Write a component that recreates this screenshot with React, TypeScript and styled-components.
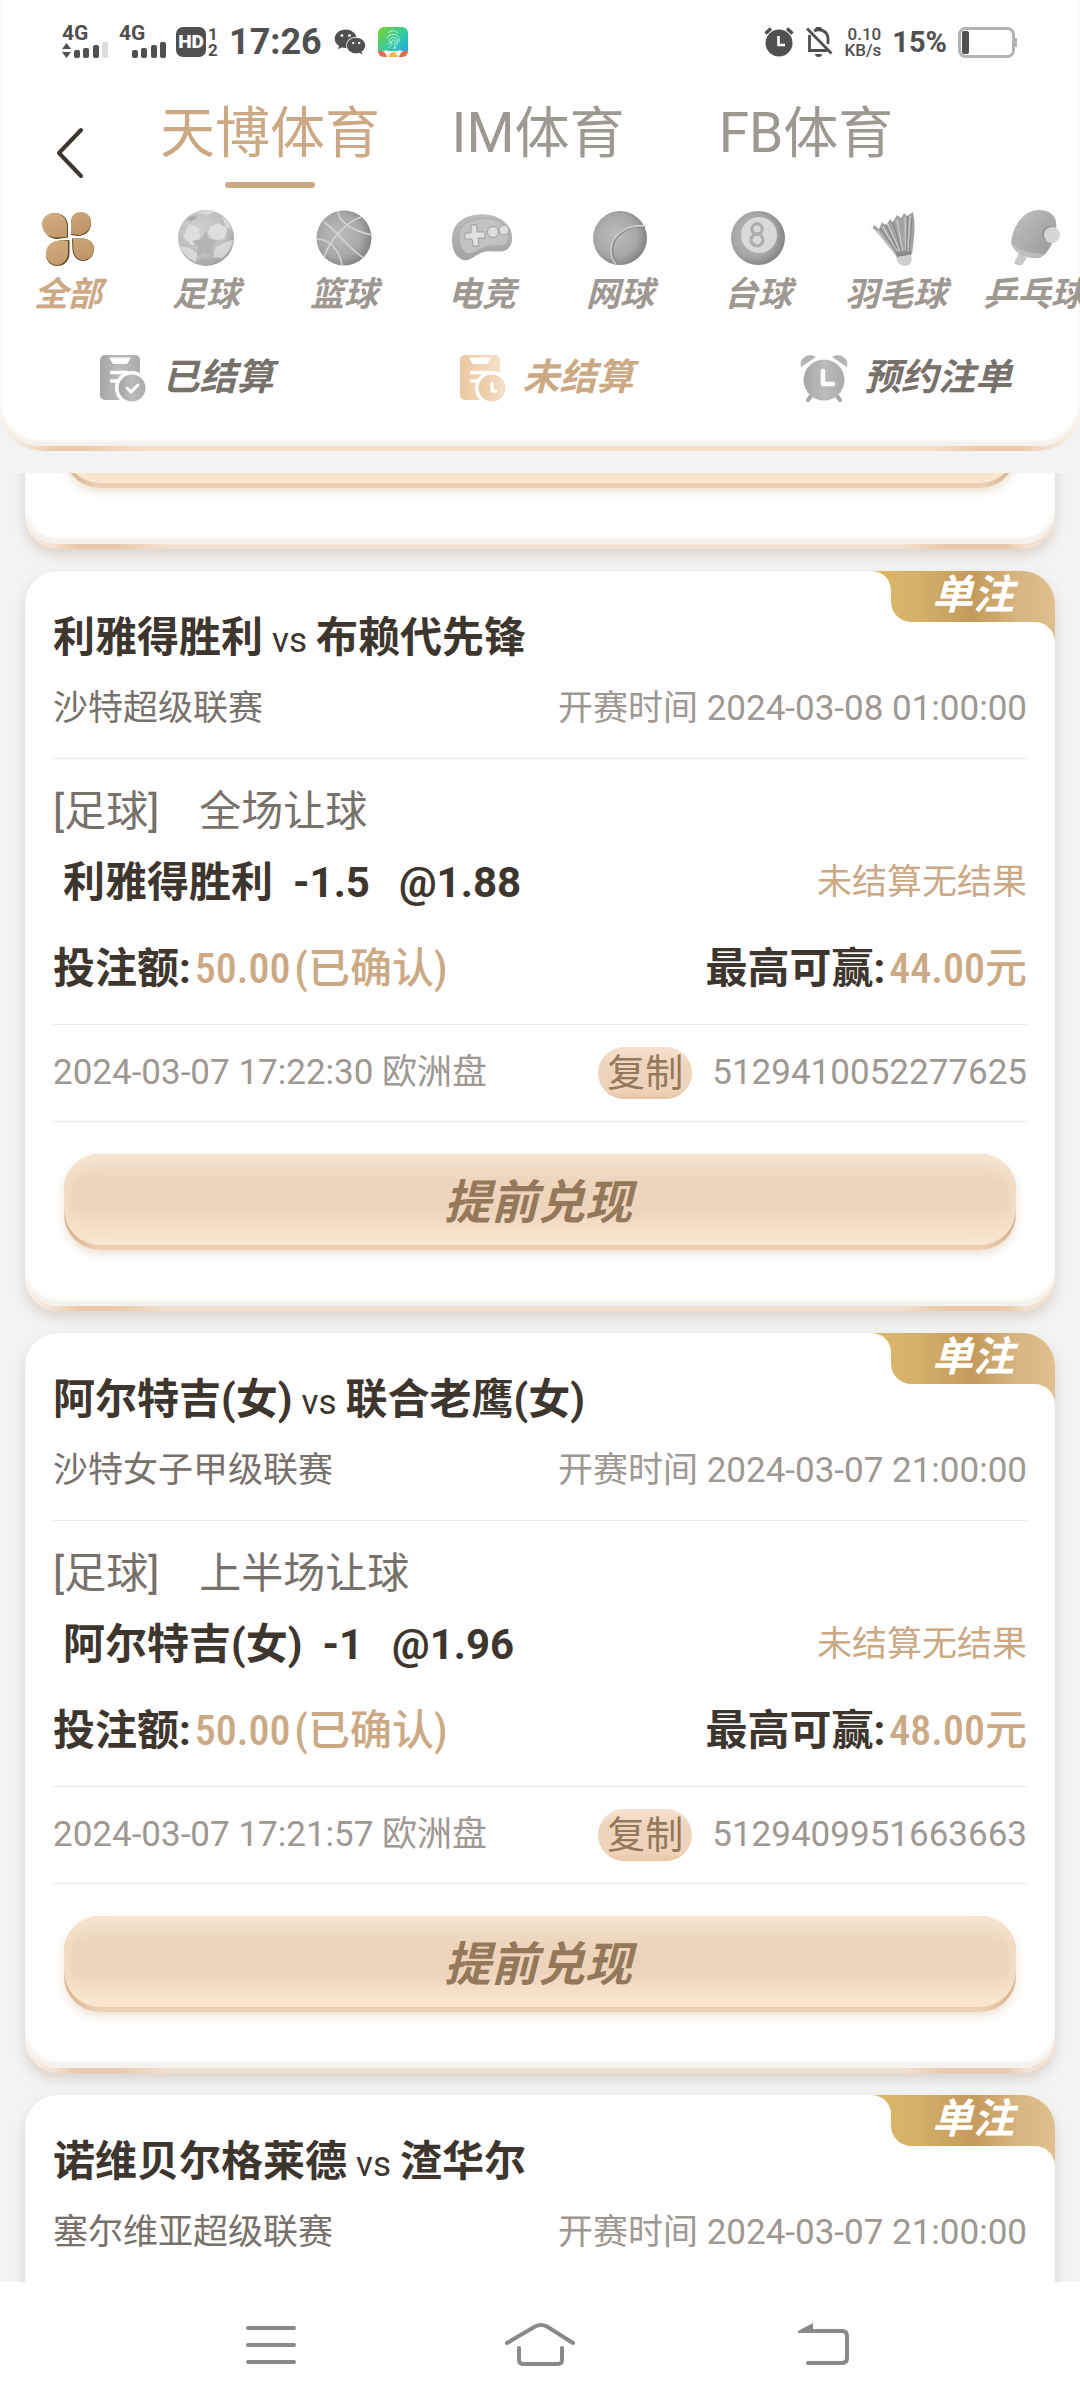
import React from "react";
import styled, { createGlobalStyle } from "styled-components";
import { FaWeixin } from "react-icons/fa";

const sans = `Roboto, "Noto Sans CJK SC", sans-serif`;
const condensed = `"Roboto Condensed", "Arial Narrow", "Liberation Sans Narrow", "Open Sans Condensed", "Noto Sans Condensed", Roboto, "Noto Sans CJK SC", sans-serif`;

const color = {
  ink: "#3d362e",
  dark: "#77716b",
  mid: "#9d9892",
  gold: "#cca985",
  brown: "#94785a",
  line: "#e9e9e9",
  page: "#f3f3f3",
  status: "#505050",
};

const GlobalStyle = createGlobalStyle`
  *, *::before, *::after { box-sizing: border-box; }
  body { margin: 0; background: #fefefe; }
  button { border: 0; padding: 0; background: none; font: inherit; color: inherit; cursor: pointer; }
  h2, p, ul { margin: 0; padding: 0; }
  svg { display: block; flex: none; }
`;

const Screen = styled.div`
  display: flex;
  flex-direction: column;
  height: 100vh;
  overflow: hidden;
  background: ${color.page};
  font-family: ${sans};
  color: ${color.ink};
`;

/* ---------- header ---------- */

const HeaderEdge = styled.header`
  flex: none;
  padding-bottom: 5px;
  border-radius: 0 0 42px 42px;
  background: linear-gradient(
    90deg,
    #faf0e8 0,
    #f3dfcd 32px,
    #e8c9ab 56px,
    #e8c9ab 80px,
    #f3dfcd 144px,
    #f3dfcd calc(100% - 150px),
    #e8c9ab calc(100% - 100px),
    #e8c9ab calc(100% - 60px),
    #f3dfcd calc(100% - 32px),
    #faf0e8 100%
  );
`;

const HeaderBody = styled.div`
  padding-bottom: 44px;
  border-radius: 0 0 40px 40px;
  background: #fefefe;
  box-shadow: inset 0 -5px 3px #f5f1ec;
`;

const StatusBar = styled.div`
  display: flex;
  align-items: center;
  justify-content: space-between;
  height: 84px;
  padding: 0 62px;
  color: ${color.status};
`;

const StatusGroup = styled.div<{ $gap: number }>`
  display: flex;
  align-items: center;
  gap: ${(p) => p.$gap}px;
`;

const Signal = styled.div`
  display: flex;
  flex-direction: column;
  width: 48px;
  font-size: 21px;
  font-weight: 700;
  line-height: 16px;
`;

const HdMark = styled.div`
  display: flex;
  align-items: center;
  gap: 2px;
`;

const HdBox = styled.span`
  width: 30px;
  border-radius: 7px;
  background: ${color.status};
  color: #fff;
  font-size: 19px;
  font-weight: 900;
  line-height: 30px;
  text-align: center;
`;

const SimPair = styled.span`
  display: flex;
  flex-direction: column;
  width: 12px;
  font-size: 17px;
  font-weight: 700;
  line-height: 16px;
`;

const Clock = styled.time`
  font-size: 36px;
  font-weight: 700;
  line-height: 42px;
`;

const Rate = styled.div`
  display: flex;
  flex-direction: column;
  align-items: flex-end;
  font-size: 17px;
  font-weight: 500;
  line-height: 16px;
`;

const Percent = styled.span`
  font-size: 29px;
  font-weight: 700;
  line-height: 34px;
`;

const TopRow = styled.div`
  display: flex;
  height: 104px;
  padding-right: 140px;
`;

const BackButton = styled.button`
  display: flex;
  align-items: center;
  width: 136px;
  padding: 34px 0 0 56px;
`;

const SourceTabs = styled.nav`
  flex: 1;
  display: grid;
  grid-template-columns: repeat(3, 1fr);
`;

const SourceTab = styled.button<{ $active?: boolean }>`
  display: flex;
  flex-direction: column;
  align-items: center;
  justify-content: flex-end;
  color: ${(p) => (p.$active ? color.gold : color.mid)};
  font-size: 55px;
  line-height: 97px;
  white-space: nowrap;

  &::after {
    content: "";
    width: 90px;
    height: 6px;
    border-radius: 3px;
    background: ${(p) => (p.$active ? color.gold : "transparent")};
  }
`;

const SportRow = styled.nav`
  display: flex;
  margin-left: -1px;
  padding-top: 22px;
  overflow: hidden;
`;

const SportItem = styled.button<{ $active?: boolean }>`
  flex: none;
  display: flex;
  flex-direction: column;
  align-items: center;
  gap: 8px;
  width: 138px;
  color: ${(p) => (p.$active ? color.gold : color.mid)};
  font-size: 34px;
  font-style: italic;
  font-weight: 700;
  line-height: 40px;
  white-space: nowrap;
`;

const StateRow = styled.nav`
  display: grid;
  grid-template-columns: repeat(3, 1fr);
  margin-top: 40px;
`;

const StateTab = styled.button<{ $active?: boolean }>`
  display: flex;
  align-items: center;
  justify-content: center;
  gap: 16px;
  padding-left: 12px;
  color: ${(p) => (p.$active ? color.gold : color.dark)};
  font-size: 37px;
  font-style: italic;
  font-weight: 700;
  line-height: 48px;
  white-space: nowrap;
`;

/* ---------- bet list ---------- */

const List = styled.main`
  flex: 1;
  min-height: 0;
  display: flex;
  flex-direction: column;
  gap: 22px;
  margin-top: 22px;
  padding: 0 25px;
  overflow: hidden;
`;

const CardEdge = styled.article<{ $kind?: "tail" | "open" }>`
  flex: ${(p) => (p.$kind === "open" ? "1 0 auto" : "none")};
  display: flex;
  flex-direction: column;
  margin-top: ${(p) => (p.$kind === "tail" ? "-81px" : "0")};
  padding-bottom: ${(p) => (p.$kind === "open" ? "0" : "5px")};
  border-radius: ${(p) => (p.$kind === "open" ? "33px 33px 0 0" : "33px")};
  background: linear-gradient(
    90deg,
    #faf0e8 0,
    #f3dfcd 30px,
    #e8c9ab 52px,
    #e8c9ab 90px,
    #f3dfcd 140px,
    #f3dfcd calc(100% - 150px),
    #e8c9ab calc(100% - 110px),
    #e8c9ab calc(100% - 50px),
    #f3dfcd calc(100% - 30px),
    #f5e3d5 100%
  );
  box-shadow: 0 6px 12px rgba(130, 95, 70, 0.22);
`;

const CardBody = styled.div<{ $open?: boolean }>`
  position: relative;
  flex: 1;
  padding: 0 28px ${(p) => (p.$open ? 24 : 56)}px;
  border-radius: ${(p) => (p.$open ? "33px 33px 0 0" : "33px")};
  background: #fefefe;
  box-shadow: ${(p) => (p.$open ? "none" : "inset 0 -6px 3px #f5f1ec")};
`;

const Badge = styled.div`
  position: absolute;
  top: 0;
  right: 0;
  width: 183px;
  height: 70px;
`;

const BadgeText = styled.span`
  position: absolute;
  top: 0;
  right: 41px;
  color: #fff;
  font-size: 41px;
  font-style: italic;
  font-weight: 700;
  line-height: 48px;
`;

const Section = styled.div<{ $top: number; $bottom: number; $ruled?: boolean }>`
  padding: ${(p) => p.$top}px 0 ${(p) => p.$bottom}px;
  border-bottom: ${(p) => (p.$ruled ? `1px solid ${color.line}` : "0")};
`;

const Match = styled.h2`
  display: flex;
  align-items: baseline;
  gap: 9px;
  font-size: 42px;
  font-weight: 700;
  line-height: 58px;
`;

const Versus = styled.span`
  font-size: 35px;
  font-weight: 400;
  line-height: 35px;
`;

const Row = styled.div<{ $top?: number }>`
  display: flex;
  align-items: center;
  justify-content: space-between;
  margin-top: ${(p) => p.$top ?? 0}px;
`;

const Small = styled.span<{ $tone: string }>`
  color: ${(p) => p.$tone};
  font-size: 35px;
  line-height: 48px;
  white-space: nowrap;
`;

const Market = styled.p`
  display: flex;
  gap: 40px;
  color: ${color.dark};
  font-size: 42px;
  line-height: 58px;
`;

const Pick = styled.p`
  display: flex;
  padding-left: 10px;
  font-size: 42px;
  font-weight: 700;
  line-height: 58px;
`;

const PickTeam = styled.span`
  margin-right: 20px;
`;

const Odds = styled.span`
  margin-left: 29px;
`;

const Money = styled.p`
  display: flex;
  align-items: baseline;
  gap: 4px;
  font-size: 42px;
  font-weight: 700;
  line-height: 58px;
`;

const Amount = styled.span`
  color: ${color.gold};
  font-family: ${condensed};
  font-weight: 500;
  line-height: 42px;
`;

const Ticket = styled.div`
  display: flex;
  align-items: center;
  gap: 20px;
`;

const CopyButton = styled.button`
  width: 94px;
  border-radius: 26px;
  background: linear-gradient(#f4e1ce, #edd5bc 35%, #edd3ba 85%, #e6c4a3);
  color: ${color.brown};
  font-size: 38px;
  line-height: 52px;
`;

const CashOut = styled.div`
  margin: 0 11px;
  padding-bottom: 5px;
  border-radius: 36px;
  background: linear-gradient(90deg, #d4ae88, #ecceb3 32px, #ecceb3 calc(100% - 32px), #d4ae88);
  box-shadow: 0 4px 8px rgba(205, 165, 125, 0.32);
`;

const CashOutButton = styled.button`
  display: block;
  width: 100%;
  height: 91px;
  padding: 6px 4px 0 0;
  border-radius: 36px;
  background: linear-gradient(#f5e5d4, #eedac4 18%, #edd5bc 32%, #edd5bc 62%, #f5e1c9 84%, #fae8d4);
  box-shadow: inset 0 0 20px rgba(248, 230, 205, 0.9);
  color: ${color.brown};
  font-size: 47px;
  font-style: italic;
  font-weight: 700;
  line-height: 85px;
`;

/* ---------- system navigation ---------- */

const SystemNav = styled.footer`
  flex: none;
  display: grid;
  grid-template-columns: repeat(3, 1fr);
  height: 126px;
  padding: 0 136px;
  background: #fefefe;
`;

const NavButton = styled.button`
  display: flex;
  align-items: center;
  justify-content: center;
`;

/* ---------- status icons ---------- */

const Bars = ({ arrows, weak }: { arrows?: boolean; weak?: boolean }) => {
  const shift = arrows ? 12 : 13;
  return (
    <svg width="48" height="18" viewBox="0 0 48 18" fill="currentColor">
      {arrows && <path d="M0 8 4.500 2 9 8ZM0 11h9l-4.500 6Z" />}
      <rect x={shift} y="9" width="6" height="8" rx="2" />
      <rect x={shift + 9} y="7" width="6" height="10" rx="2" />
      <rect x={shift + 19} y="4" width="6" height="13" rx="2" />
      <rect x={shift + 28} y="1" width="6" height="16" rx="2" fill={weak ? "#dcdcdc" : undefined} />
    </svg>
  );
};

const AppIcon = () => (
  <svg width="30" height="30" viewBox="0 0 30 30">
    <defs>
      <linearGradient id="app" x1="0" y1="0" x2="1" y2="1">
        <stop offset="0" stopColor="#7dd52c" />
        <stop offset=".5" stopColor="#35c9a0" />
        <stop offset="1" stopColor="#12a8f4" />
      </linearGradient>
      <clipPath id="appClip"><rect width="30" height="30" rx="6" /></clipPath>
    </defs>
    <g clipPath="url(#appClip)">
      <rect width="30" height="30" fill="url(#app)" />
      <rect y="24" width="30" height="6" fill="#fbe7dc" />
      <path d="M0 24c4-1 8 1 9 6H0ZM30 24c-4-1-8 1-9 6h9Z" fill="#ee6a4c" />
      <path d="M6 24l3-1 2 4-2 2ZM24 24l-3-1-2 4 2 2Z" fill="#fff" />
      <path d="M11 30c0-6 8-6 8 0Z" fill="#f5b53c" />
      <g fill="none" stroke="#d8fbe8" strokeWidth=".8" strokeLinecap="round">
        <path d="M10 6c3-3 7-3 10 0M9 11c2-5 10-5 12 0v4M11 14c1-5 8-5 8 0v4M13 16c0-4 4-4 4-1 0 3 0 5-2 7M10 17c2 0 2-1 2-2M11 20c3-1 3-3 3-5M18 20l-1 2" />
      </g>
    </g>
  </svg>
);

const AlarmSolid = () => (
  <svg width="30" height="30" viewBox="0 0 30 30">
    <circle cx="15" cy="16" r="13.500" fill={color.status} />
    <path d="M1.500 6.500 7 1.500M28.500 6.500 23 1.500" stroke={color.status} strokeWidth="3.500" />
    <path d="M14.500 9v9h6.500" fill="none" stroke="#fff" strokeWidth="2.600" />
  </svg>
);

const BellOff = () => (
  <svg width="28" height="30" viewBox="0 0 28 30" fill="none" stroke={color.status} strokeWidth="2.800">
    <path d="M2 1.500 26.500 26.500" />
    <path d="M4.500 8v15.500h18M9 4c6-3 14 0 14 8v5" />
    <path d="M10 2.500a3.500 3 0 0 1 7 0ZM10 27h7a3.500 3 0 0 1-7 0Z" fill={color.status} stroke="none" />
  </svg>
);

const Battery = () => (
  <svg width="60" height="31" viewBox="0 0 60 31">
    <rect x="1.500" y="1.500" width="54" height="28" rx="6" fill="#fff" stroke="#b3b3b3" strokeWidth="3" />
    <rect x="4" y="4" width="7" height="23" rx="2" fill={color.status} />
    <path d="M58 11v9" stroke="#b3b3b3" strokeWidth="2" />
  </svg>
);

/* ---------- sport icons ---------- */

const HiddenDefs = styled.svg`
  position: absolute;
`;

const SportDefs = () => (
  <HiddenDefs width="0" height="0" aria-hidden="true">
    <defs>
      <linearGradient id="gold" x1="0" y1="0" x2="1" y2="1">
        <stop offset="0" stopColor="#d6b081" />
        <stop offset="1" stopColor="#b98f61" />
      </linearGradient>
      <radialGradient id="light" cx=".4" cy=".35" r=".7">
        <stop offset="0" stopColor="#d0d0d0" />
        <stop offset=".7" stopColor="#bdbdbd" />
        <stop offset="1" stopColor="#9b9b9b" />
      </radialGradient>
      <radialGradient id="ball" cx=".42" cy=".45" r=".62">
        <stop offset="0" stopColor="#bdbdbd" />
        <stop offset=".65" stopColor="#a6a6a6" />
        <stop offset="1" stopColor="#7c7c7c" />
      </radialGradient>
      <linearGradient id="pad" x1="0" y1="0" x2="0" y2="1">
        <stop offset="0" stopColor="#bdbdbd" />
        <stop offset="1" stopColor="#a2a2a2" />
      </linearGradient>
      <linearGradient id="steel" x1="0" y1="0" x2="1" y2="1">
        <stop offset="0" stopColor="#c2c2c2" />
        <stop offset="1" stopColor="#979797" />
      </linearGradient>
      <linearGradient id="soft" x1="0" y1="0" x2="1" y2="0">
        <stop offset="0" stopColor="#a6a6a6" />
        <stop offset=".5" stopColor="#bcbcbc" />
        <stop offset="1" stopColor="#ababab" />
      </linearGradient>
      <linearGradient id="peach" x1="0" y1="0" x2="1" y2="0">
        <stop offset="0" stopColor="#ecc8a2" />
        <stop offset="1" stopColor="#f4e0c8" />
      </linearGradient>
      <linearGradient id="badge" x1="0" y1="0" x2="1" y2="0">
        <stop offset="0" stopColor="#dcb968" />
        <stop offset=".25" stopColor="#d4b06a" />
        <stop offset=".55" stopColor="#c49a5c" />
        <stop offset=".8" stopColor="#d8b582" />
        <stop offset="1" stopColor="#dfc08e" />
      </linearGradient>
    </defs>
  </HiddenDefs>
);

const Icon56 = ({ children }: { children: React.ReactNode }) => (
  <svg width="64" height="56" viewBox="-4 0 64 56">{children}</svg>
);

const AllIcon = () => (
  <Icon56>
    <g fill="#5f4527">
      <path d="M28 27.500V16C28 8 22 3 15 3C8 3 3 9 4 16C4 24 10 29 17 29ZM31 25V13C31 7 35 3 41 3C47 3 52 8 51 14C51 21 45 26 38 26Z" />
      <path d="M29.500 30V43C29.500 51 24 56 17 56C11 56 6 51 6 45C7 36 13 31 20 30.500ZM32 28.500H42C49 28.500 54 33 54 39C54 46 49 51 43 51C37 51 33 46 32.500 40Z" />
    </g>
    <g fill="url(#gold)">
      <path d="M27 27V15C26 7 21 3 14 3C7 3 2 8 2 14C2 22 8 27 15 27.500ZM31 24V12C31 6 35 2 41 2C47 2 51 6 51 12C51 19 46 24 39 25Z" />
      <path d="M28 31V42C28 50 23 55 17 55C11 55 6 50 6 44C6 36 11 31 19 30.500ZM33 28.500H43C49 28.500 54 33 54 39C54 45 49 50 43 50C38 50 34 46 33.500 40Z" />
    </g>
  </Icon56>
);

const FootballIcon = () => (
  <Icon56>
    <circle cx="28" cy="28" r="28" fill="url(#light)" />
    <g fill="#dedede">
      <path d="M11 14l10 4 1 12-8 5-9-8ZM32 17l8-4 9 5-2 11-11 2-6-7Z" />
      <path d="M2 36l10 2 8 6-2 8C10 49 4 43 2 36ZM38 37l12-6 5-1c-1 8-5 14-11 18l-9-1ZM19 3l10 2 9-4-8-1ZM44 6l6 5 4 9-6-3Z" opacity=".8" />
    </g>
    <path d="M28 21l3 8 9 1-6 7 1 9-8-4-8 4 1-9-6-6 9-2Z" fill="#b3b3b3" />
    <path d="M9 8l8-3 2 3-7 4ZM22 51l7-2 7 4-7 3Z" fill="#adadad" />
  </Icon56>
);

const BasketballIcon = () => (
  <Icon56>
    <circle cx="28" cy="28" r="27.500" fill="url(#ball)" />
    <g fill="none" stroke="#d2d2d2" strokeWidth="1.600">
      <path d="M45 7C30 12 12 32 8 48M22 1c0 10 14 20 34 24M8 12c14 10 28 30 40 36M1 29c10 0 22 8 25 26" />
    </g>
  </Icon56>
);

const GamepadIcon = () => (
  <Icon56>
    <path d="M-2 32C-3 18 4 8 20 5c16-3 32 3 37 16 3 10 0 18-7 20-9 2-16-2-25 3-6 3-11 8-16 6C2 47-1 42-2 32Z" fill="url(#pad)" />
    <path d="M5 28C4 18 10 12 24 9c14-2 26 2 30 12 2 9-1 15-8 15-9 0-13-1-23 5-5 3-9 4-12 1-3-2-5-7-6-14Z" fill="#c2c2c2" stroke="#ababab" strokeWidth="1" />
    <path d="M17 15h6v7h8v6h-7l1 8h-6l-1-7h-7v-6h6Z" fill="#e0e0e0" stroke="#9d9d9d" strokeWidth="1" />
    <circle cx="39" cy="22" r="5.500" fill="#dedede" stroke="#9d9d9d" />
    <circle cx="50" cy="20" r="5" fill="#dedede" stroke="#9d9d9d" />
  </Icon56>
);

const TennisIcon = () => (
  <Icon56>
    <circle cx="28" cy="28" r="27" fill="url(#ball)" />
    <path d="M53 17C35 14 20 26 20 40c0 6 2 11 5 14" fill="none" stroke="#858585" strokeWidth="2.600" />
    <path d="M52 16C34 14 19 26 19 40c0 6 2 11 5 14" fill="none" stroke="#cacaca" strokeWidth="1.800" />
  </Icon56>
);

const PoolIcon = () => (
  <Icon56>
    <circle cx="28" cy="28" r="27" fill="url(#ball)" />
    <circle cx="29" cy="25" r="18" fill="#d9d9d9" />
    <g fill="none" stroke="#adadad" strokeWidth="3.200">
      <circle cx="27" cy="19" r="5.200" />
      <circle cx="27" cy="30" r="6" />
    </g>
  </Icon56>
);

const ShuttleIcon = () => (
  <Icon56>
    <path d="M1 15l4 3 1-3 5 4 3-7 4 4 4-7 3 3 4-7 4 3 3-5 3 3 6-4c3 12 1 27-1 42l-15 3L8 21Z" fill="#a3a3a3" />
    <path d="M9 20l20 26M15 17l16 28M20 14l13 30M29 10l6 34M37 7l1 38M42 6l-2 39" stroke="#cfcfcf" strokeWidth="1.200" />
    <path d="M12 18l18 26M25 12l9 31M40 6l-2 38M44 8l-3 34M17 14l12 24" stroke="#858585" strokeWidth="1.100" />
    <path d="M27 42l16-1v4l-14 2Z" fill="#8b8b8b" />
    <path d="M28 47l15-2c2 7-1 11-6 11-4 0-8-3-9-9Z" fill="#cfcfcf" />
  </Icon56>
);

const PaddleIcon = () => (
  <svg width="64" height="56" viewBox="-9 1 64 56">
    <path d="M8 44l8 5-5 7c-2 1-7 0-8-2Z" fill="#c8c8c8" />
    <path d="M0 34C1 18 12 1 28 1c12 0 19 7 17 19-2 12-7 24-15 28-8 3-25 0-30-14Z" fill="url(#steel)" />
    <path d="M0 34C8 42 20 44 34 45c-10 7-29 3-34-11Z" fill="#bdbdbd" />
    <circle cx="39" cy="25" r="8" fill="#808080" opacity=".5" />
    <circle cx="41" cy="26" r="8" fill="#d6d6d6" />
  </svg>
);

const Clipboard = ({ paint, mark }: { paint: string; mark: string }) => (
  <svg width="48" height="48" viewBox="0 0 48 48">
    <rect x="1" y="1" width="40" height="45" rx="5" fill={paint} />
    <path d="M10 3.500h22l-4 6.500H14Z" fill="#fff" />
    <path d="M11 18.500h18M11 27h10" stroke="#fff" strokeWidth="3.500" />
    <circle cx="33" cy="34" r="17" fill="#fefefe" />
    <circle cx="33" cy="34" r="13.500" fill={paint} />
    <path d={mark} fill="none" stroke="#fff" strokeWidth="3" strokeLinecap="round" strokeLinejoin="round" />
  </svg>
);

const AlarmIcon = () => (
  <svg width="48" height="48" viewBox="0 0 48 48">
    <path d="M1 13C-1 4 8-2 16 3ZM47 13C49 4 40-2 32 3Z" fill="#b5b5b5" />
    <circle cx="24" cy="26" r="22.500" fill="#fefefe" />
    <path d="M11 42l-3 4M37 42l3 4" stroke="#a8a8a8" strokeWidth="4" strokeLinecap="round" />
    <circle cx="24" cy="26" r="20.500" fill="url(#soft)" />
    <path d="M23 17v13h10" fill="none" stroke="#fff" strokeWidth="4.500" strokeLinecap="round" strokeLinejoin="round" />
  </svg>
);

const sports = [
  { name: "全部", icon: <AllIcon />, active: true },
  { name: "足球", icon: <FootballIcon /> },
  { name: "篮球", icon: <BasketballIcon /> },
  { name: "电竞", icon: <GamepadIcon /> },
  { name: "网球", icon: <TennisIcon /> },
  { name: "台球", icon: <PoolIcon /> },
  { name: "羽毛球", icon: <ShuttleIcon /> },
  { name: "乒乓球", icon: <PaddleIcon /> },
];

/* ---------- bets ---------- */

type Detail = {
  market: string;
  pick: string;
  line: string;
  odds: string;
  stake: string;
  win: string;
  placed: string;
  id: string;
};

type Bet = { home: string; away: string; league: string; start: string; detail?: Detail };

const bets: Bet[] = [
  {
    home: "利雅得胜利",
    away: "布赖代先锋",
    league: "沙特超级联赛",
    start: "2024-03-08 01:00:00",
    detail: {
      market: "全场让球",
      pick: "利雅得胜利",
      line: "-1.5",
      odds: "@1.88",
      stake: "50.00",
      win: "44.00",
      placed: "2024-03-07 17:22:30",
      id: "5129410052277625",
    },
  },
  {
    home: "阿尔特吉(女)",
    away: "联合老鹰(女)",
    league: "沙特女子甲级联赛",
    start: "2024-03-07 21:00:00",
    detail: {
      market: "上半场让球",
      pick: "阿尔特吉(女)",
      line: "-1",
      odds: "@1.96",
      stake: "50.00",
      win: "48.00",
      placed: "2024-03-07 17:21:57",
      id: "5129409951663663",
    },
  },
  { home: "诺维贝尔格莱德", away: "渣华尔", league: "塞尔维亚超级联赛", start: "2024-03-07 21:00:00" },
];

const BetCard = ({ home, away, league, start, detail }: Bet) => (
  <CardEdge $kind={detail ? undefined : "open"}>
    <CardBody $open={!detail}>
      <Badge>
        <svg width="183" height="70" viewBox="0 0 183 70">
          <path d="M0 0H150C168 0 183 15 183 33V70C182 59 174 51 162 51H40C28 51 19 42 19 30V20C19 9 12 1 0 0Z" fill="url(#badge)" />
        </svg>
        <BadgeText>单注</BadgeText>
      </Badge>
      <Section $top={38} $bottom={25} $ruled={!!detail}>
        <Match>
          <span>{home}</span>
          <Versus>vs</Versus>
          <span>{away}</span>
        </Match>
        <Row $top={18}>
          <Small $tone={color.dark}>{league}</Small>
          <Small $tone={color.mid}>开赛时间 {start}</Small>
        </Row>
      </Section>
      {detail && (
        <>
          <Section $top={24} $bottom={26} $ruled>
            <Market>
              <span>[足球]</span>
              <span>{detail.market}</span>
            </Market>
            <Row $top={13}>
              <Pick>
                <PickTeam>{detail.pick}</PickTeam>
                <span>{detail.line}</span>
                <Odds>{detail.odds}</Odds>
              </Pick>
              <Small $tone={color.gold}>未结算无结果</Small>
            </Row>
            <Row $top={28}>
              <Money>
                <span>投注额:</span>
                <Amount>{detail.stake}</Amount>
                <Amount>(已确认)</Amount>
              </Money>
              <Money>
                <span>最高可赢:</span>
                <Amount>{detail.win}元</Amount>
              </Money>
            </Row>
          </Section>
          <Section $top={22} $bottom={22} $ruled>
            <Row>
              <Small $tone={color.mid}>{detail.placed} 欧洲盘</Small>
              <Ticket>
                <CopyButton type="button">复制</CopyButton>
                <Small $tone={color.mid}>{detail.id}</Small>
              </Ticket>
            </Row>
          </Section>
          <Section $top={32} $bottom={0}>
            <CashOut>
              <CashOutButton type="button">提前兑现</CashOutButton>
            </CashOut>
          </Section>
        </>
      )}
    </CardBody>
  </CardEdge>
);

export default function App() {
  return (
    <Screen>
      <GlobalStyle />
      <SportDefs />
      <HeaderEdge>
        <HeaderBody>
          <StatusBar>
            <StatusGroup $gap={9}>
              <Signal>
                4G
                <Bars arrows weak />
              </Signal>
              <Signal>
                4G
                <Bars />
              </Signal>
              <HdMark>
                <HdBox>HD</HdBox>
                <SimPair>
                  <span>1</span>
                  <span>2</span>
                </SimPair>
              </HdMark>
              <StatusGroup $gap={12}>
                <Clock>17:26</Clock>
                <FaWeixin size={32} />
                <AppIcon />
              </StatusGroup>
            </StatusGroup>
            <StatusGroup $gap={11}>
              <AlarmSolid />
              <BellOff />
              <Rate>
                <span>0.10</span>
                <span>KB/s</span>
              </Rate>
              <Percent>15%</Percent>
              <Battery />
            </StatusGroup>
          </StatusBar>
          <TopRow>
            <BackButton type="button" aria-label="返回">
              <svg width="28" height="52" viewBox="0 0 28 52" fill="none" stroke={color.ink} strokeWidth="4" strokeLinecap="round" strokeLinejoin="round">
                <path d="M25 3 3 26 25 49" />
              </svg>
            </BackButton>
            <SourceTabs>
              <SourceTab type="button" $active>天博体育</SourceTab>
              <SourceTab type="button">IM体育</SourceTab>
              <SourceTab type="button">FB体育</SourceTab>
            </SourceTabs>
          </TopRow>
          <SportRow>
            {sports.map((s) => (
              <SportItem key={s.name} type="button" $active={s.active}>
                {s.icon}
                {s.name}
              </SportItem>
            ))}
          </SportRow>
          <StateRow>
            <StateTab type="button">
              <Clipboard paint="url(#soft)" mark="M28 34l4 4 7-7" />
              已结算
            </StateTab>
            <StateTab type="button" $active>
              <Clipboard paint="url(#peach)" mark="M33 29v8h4" />
              未结算
            </StateTab>
            <StateTab type="button">
              <AlarmIcon />
              预约注单
            </StateTab>
          </StateRow>
        </HeaderBody>
      </HeaderEdge>

      <List>
        <CardEdge $kind="tail">
          <CardBody>
            <CashOut>
              <CashOutButton type="button" aria-label="提前兑现" />
            </CashOut>
          </CardBody>
        </CardEdge>
        {bets.map((bet) => (
          <BetCard key={bet.home} {...bet} />
        ))}
      </List>

      <SystemNav>
        <NavButton type="button" aria-label="菜单">
          <svg width="72" height="48" viewBox="0 0 72 48" stroke="#898989" strokeWidth="4" strokeLinecap="round">
            <path d="M13 7h46M13 24h46M13 41h46" />
          </svg>
        </NavButton>
        <NavButton type="button" aria-label="主页">
          <svg width="72" height="48" viewBox="0 0 72 48" fill="none" stroke="#898989" strokeWidth="4" strokeLinecap="round">
            <path d="M3 22 31 5.500q6-3 12 0L69 22M15 27v12q0 4 5 4h33q5 0 5-4V27" />
          </svg>
        </NavButton>
        <NavButton type="button" aria-label="后退">
          <svg width="84" height="48" viewBox="0 0 84 48" fill="none" stroke="#898989" strokeWidth="4" strokeLinecap="round">
            <path d="M44 10h31q5 0 5 5v22q0 5-5 5H41" />
            <path d="M31 12V10L46 2v10Z" fill="#898989" stroke="none" />
          </svg>
        </NavButton>
      </SystemNav>
    </Screen>
  );
}
